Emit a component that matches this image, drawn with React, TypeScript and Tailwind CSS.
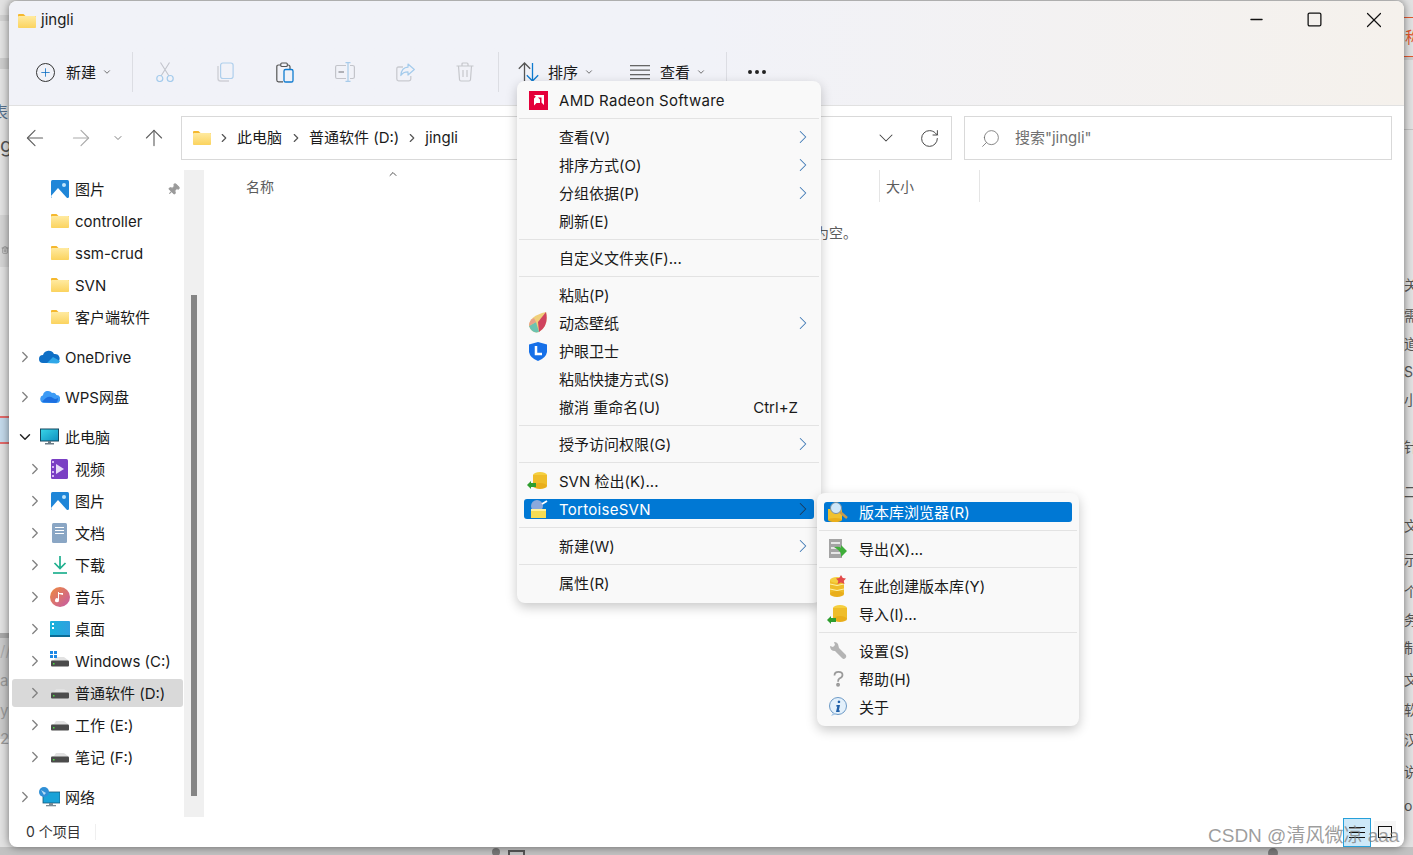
import React from "react";
import { ChevronDown, ChevronRight, ArrowLeft, ArrowRight, ArrowUp, RotateCw, Search, Plus, Pin, Minus, Square, X, Ellipsis, Trash2 } from "lucide-react";

const FONT = "font-['Inter','Noto_Sans_CJK_SC',sans-serif]";

const Folder = ({ s = 18 }: { s?: number }) => (
  <svg width={s} height={s * 0.78} viewBox="0 0 18 14">
    <path d="M0 1.200C0 .5.5 0 1.200 0h4.300l2 2H18v2H0z" fill="#f5b82e" />
    <rect y="2" width="18" height="12" rx="1" fill="url(#fg)" />
    <defs>
      <linearGradient id="fg" x1="0" y1="0" x2="0" y2="1">
        <stop offset="0" stopColor="#ffeaa0" />
        <stop offset="1" stopColor="#fbd35e" />
      </linearGradient>
    </defs>
  </svg>
);

const Drive = ({ win }: { win?: boolean }) => (
  <svg width="20" height="20" viewBox="0 0 20 20">
    <path d="M4 9 L6 6 H14 L18 9 V10 H1z" fill="#e2e2e2" />
    <rect x="1" y="9.500" width="18" height="6" rx="1" fill="#4b4b4b" />
    <rect x="3" y="12" width="1.500" height="1.500" fill="#4ade40" />
    {win && (
      <g fill="#1e88e5">
        <rect x="0" y="0" width="3" height="3" />
        <rect x="4" y="0" width="3" height="3" />
        <rect x="0" y="4" width="3" height="3" />
        <rect x="4" y="4" width="3" height="3" />
      </g>
    )}
  </svg>
);

const Pic = () => (
  <svg width="18" height="18" viewBox="0 0 18 18">
    <rect width="18" height="18" rx="1.500" fill="#1f86d8" />
    <circle cx="13" cy="5" r="2" fill="#bfe4fb" />
    <path d="M0 16 L7 8 L16 18 H1z" fill="#fff" />
  </svg>
);

const icons: Record<string, React.ReactNode> = {
  folder: <Folder />,
  pic: <Pic />,
  onedrive: (
    <svg width="21" height="14" viewBox="0 0 21 14">
      <path d="M4 13a4 4 0 0 1 0-8 6 6 0 0 1 11-1 4.500 4.500 0 0 1 2 9z" fill="#0f6fc6" />
      <path d="M8 13 L14 7 L21 11 Q20 14 17 13.500z" fill="#2fa7e8" />
    </svg>
  ),
  wps: (
    <svg width="20" height="14" viewBox="0 0 20 14">
      <path d="M4 13a4 4 0 0 1-1-7.800A5 5 0 0 1 12 3a4 4 0 0 1 4.500 2A4 4 0 0 1 16 13z" fill="#3d9bf5" />
      <path d="M2 12 Q8 4 13 8 Q15 10 18 8 Q18 13 15 13z" fill="#1c6fe0" />
    </svg>
  ),
  pc: (
    <svg width="19" height="18" viewBox="0 0 19 18">
      <rect x="0.500" y="1" width="18" height="12" fill="url(#pcg)" stroke="#16475f" />
      <rect x="8" y="13" width="3" height="2" fill="#6b7b85" />
      <rect x="5" y="15" width="9" height="1.500" fill="#6b7b85" />
      <defs>
        <linearGradient id="pcg" x1="0" y1="0" x2="1" y2="1">
          <stop offset="0" stopColor="#39d6e8" />
          <stop offset="1" stopColor="#0e8fc0" />
        </linearGradient>
      </defs>
    </svg>
  ),
  video: (
    <svg width="17" height="20" viewBox="0 0 17 20">
      <rect width="17" height="20" rx="1.500" fill="#7a3fc4" />
      <path d="M5 5 L13 10 L5 15z" fill="#e8dcfa" />
      <g fill="#d7b8f5">
        <rect x="1" y="2" width="2" height="2" />
        <rect x="1" y="7" width="2" height="2" />
        <rect x="1" y="12" width="2" height="2" />
        <rect x="1" y="16" width="2" height="2" />
      </g>
    </svg>
  ),
  doc: (
    <svg width="15" height="20" viewBox="0 0 15 20">
      <rect width="15" height="20" rx="1.500" fill="#8aa6c4" />
      <g fill="#fff">
        <rect x="3" y="4" width="9" height="1" />
        <rect x="3" y="7" width="9" height="1" />
        <rect x="3" y="10" width="9" height="1" />
      </g>
    </svg>
  ),
  down: (
    <svg width="16" height="20" viewBox="0 0 16 20" fill="none" stroke="#1fb08f" strokeWidth="1.700">
      <path d="M8 1 V13 M2.500 8 L8 13.500 L13.500 8" />
      <path d="M1 18 H15" />
    </svg>
  ),
  music: (
    <svg width="20" height="20" viewBox="0 0 20 20">
      <circle cx="10" cy="10" r="10" fill="url(#mg)" />
      <path d="M9 5 L9 13 A2 2 0 1 1 8 11.500 V5 Z M8 5 L13 6 V8 L9 7z" fill="#fff" />
      <defs>
        <linearGradient id="mg" x1="0" y1="0" x2="1" y2="1">
          <stop offset="0" stopColor="#ef8a3c" />
          <stop offset="1" stopColor="#c45aa8" />
        </linearGradient>
      </defs>
    </svg>
  ),
  desktop: (
    <svg width="20" height="16" viewBox="0 0 20 16">
      <rect width="20" height="16" rx="1" fill="url(#dg)" />
      <rect x="2" y="2" width="2" height="2" fill="#fff" />
      <rect x="2" y="6" width="2" height="2" fill="#fff" />
      <rect y="14" width="20" height="2" fill="#0a6c96" />
      <defs>
        <linearGradient id="dg" x1="0" y1="0" x2="1" y2="0">
          <stop offset="0" stopColor="#19b3da" />
          <stop offset="1" stopColor="#2fa0e0" />
        </linearGradient>
      </defs>
    </svg>
  ),
  drive: <Drive />,
  win: <Drive win />,
  net: (
    <svg width="21" height="20" viewBox="0 0 21 20">
      <rect x="4" y="5" width="17" height="11" fill="#19a2d8" stroke="#14597a" strokeWidth=".8" />
      <rect x="10" y="16" width="4" height="2" fill="#7a8a94" />
      <rect x="7" y="18" width="10" height="1.300" fill="#7a8a94" />
      <circle cx="5" cy="5" r="5" fill="#2f8fd6" />
      <path d="M2 3 L7 6 L5 8z" fill="#b9dcf5" />
    </svg>
  ),
};

type Nav = { icon: string; label: string; indent: number; arrow?: "r" | "d"; gap?: boolean; sel?: boolean; pin?: boolean };

const nav: Nav[] = [
  { icon: "pic", label: "图片", indent: 1, pin: true },
  { icon: "folder", label: "controller", indent: 1 },
  { icon: "folder", label: "ssm-crud", indent: 1 },
  { icon: "folder", label: "SVN", indent: 1 },
  { icon: "folder", label: "客户端软件", indent: 1 },
  { icon: "onedrive", label: "OneDrive", indent: 0, arrow: "r", gap: true },
  { icon: "wps", label: "WPS网盘", indent: 0, arrow: "r", gap: true },
  { icon: "pc", label: "此电脑", indent: 0, arrow: "d", gap: true },
  { icon: "video", label: "视频", indent: 1, arrow: "r" },
  { icon: "pic", label: "图片", indent: 1, arrow: "r" },
  { icon: "doc", label: "文档", indent: 1, arrow: "r" },
  { icon: "down", label: "下载", indent: 1, arrow: "r" },
  { icon: "music", label: "音乐", indent: 1, arrow: "r" },
  { icon: "desktop", label: "桌面", indent: 1, arrow: "r" },
  { icon: "win", label: "Windows (C:)", indent: 1, arrow: "r" },
  { icon: "drive", label: "普通软件 (D:)", indent: 1, arrow: "r", sel: true },
  { icon: "drive", label: "工作 (E:)", indent: 1, arrow: "r" },
  { icon: "drive", label: "笔记 (F:)", indent: 1, arrow: "r" },
  { icon: "net", label: "网络", indent: 0, arrow: "r", gap: true },
];

const NavRow = ({ n }: { n: Nav }) => (
  <div className={`relative flex h-[28px] items-center rounded-[3px] shrink-0 ml-[3px] mr-[1px] ${n.sel ? "bg-[#d9d9d9]" : ""} ${n.gap ? "mt-[12px]" : "mt-[4px]"}`}>
    <div className={`flex justify-center items-center shrink-0 mr-[2px] ${n.indent ? "w-[36px] pl-[10px]" : "w-[26px]"}`}>
      {n.arrow === "r" && <ChevronRight size={18} strokeWidth={1.7} className="text-[#808080]" />}
      {n.arrow === "d" && <ChevronDown size={18} strokeWidth={1.9} className="text-[#222]" />}
    </div>
    <div className="w-[25px] flex items-center justify-center shrink-0 -ml-[3px] mr-[3px]">{icons[n.icon]}</div>
    <span className="text-[15px] text-[#1a1a1a] whitespace-nowrap pt-[2px]">{n.label}</span>
    {n.pin && <Pin size={13} className="absolute right-[3px] text-[#9a9a9a] fill-[#9a9a9a] rotate-45" />}
  </div>
);

const Tool = ({ children, className = "" }: { children: React.ReactNode; className?: string }) => (
  <div className={`flex items-center justify-center ${className}`}>{children}</div>
);

const CutIcon = () => (
  <svg width="18" height="20" viewBox="0 0 18 20" fill="none">
    <path d="M5 14 L13.500 .5 M13 14 L4.500 .5" stroke="#c2c4cc" strokeWidth="1.100" />
    <circle cx="3.800" cy="16.500" r="3" stroke="#a4cbec" strokeWidth="1.200" />
    <circle cx="14.200" cy="16.500" r="3" stroke="#a4cbec" strokeWidth="1.200" />
  </svg>
);
const CopyIcon = () => (
  <svg width="17" height="20" viewBox="0 0 17 20" fill="none">
    <path d="M1 4 V16.500 Q1 19 3.500 19 H12" stroke="#cfd0d6" strokeWidth="1.400" />
    <rect x="3.600" y="1" width="12.500" height="15.500" rx="2.200" stroke="#afcfec" strokeWidth="1.200" />
  </svg>
);
const PasteIcon = () => (
  <svg width="18" height="21" viewBox="0 0 18 21" fill="none">
    <path d="M5 3 H2.500 Q.8 3 .8 4.800 V18 Q.8 19.800 2.500 19.800 H7 M11 3 H12 Q14 3 14 5 V7" stroke="#555" strokeWidth="1.200" />
    <rect x="4.800" y="1" width="6.500" height="3.500" rx="1" stroke="#555" strokeWidth="1.100" />
    <rect x="8" y="7.500" width="9" height="12.500" rx="1.600" stroke="#0f7bd0" strokeWidth="1.300" />
  </svg>
);
const RenameIcon = () => (
  <svg width="20" height="20" viewBox="0 0 20 20" fill="none" stroke="#c3c4ca" strokeWidth="1.200">
    <path d="M11 3.500 H2 Q.6 3.500 .6 5 V15 Q.6 16.500 2 16.500 H11 M15 3.500 H17.500 Q19.400 3.500 19.400 5 V15 Q19.400 16.500 17.500 16.500 H15" />
    <path d="M13 .6 V19.400 M10.500 .6 H15.500 M10.500 19.400 H15.500" stroke="#a8cbea" />
    <path d="M3.500 10 H9" stroke="#9a9ba2" strokeWidth="1.500" />
  </svg>
);
const ShareIcon = () => (
  <svg width="19" height="19" viewBox="0 0 19 19" fill="none">
    <path d="M7 4 H2.500 Q.8 4 .8 5.800 V16 Q.8 17.800 2.500 17.800 H13 Q14.800 17.800 14.800 16 V13" stroke="#c9cad0" strokeWidth="1.300" />
    <path d="M12 1 L18.300 6.500 L12 12 V8.800 Q7 8.800 4.800 12.500 Q5.500 4.500 12 4.200z" stroke="#a4cbec" strokeWidth="1.200" strokeLinejoin="round" />
  </svg>
);
const BinIcon = () => (
  <svg width="18" height="20" viewBox="0 0 18 20" fill="none" stroke="#c6c7cc" strokeWidth="1.200">
    <path d="M.5 4 H17.500 M6 4 V2 Q6 1 7 1 H11 Q12 1 12 2 V4" />
    <path d="M2.500 4 L3.500 17.500 Q3.600 19 5 19 H13 Q14.400 19 14.500 17.500 L15.500 4" />
    <path d="M7 8 V15 M11 8 V15" />
  </svg>
);
const SortIcon = () => (
  <svg width="21" height="20" viewBox="0 0 21 20" fill="none" strokeWidth="1.300">
    <path d="M6.500 19 V1 M.8 6.700 L6.500 1 L12.200 6.700" stroke="#555" />
    <path d="M14.500 1 V19 M8.800 13.300 L14.500 19 L20.200 13.300" stroke="#0f7bd0" />
  </svg>
);
const ViewIcon = () => (
  <svg width="20" height="16" viewBox="0 0 20 16" fill="#666">
    <rect y="1" width="20" height="1.300" />
    <rect y="5.500" width="20" height="1.300" />
    <rect y="10" width="20" height="1.300" />
    <rect y="14" width="20" height="1.300" />
  </svg>
);

type MI = { t: string; ic?: React.ReactNode; arrow?: boolean; sep?: boolean; hot?: boolean; sc?: string; wide?: boolean };

const withArrow = (c: string) => (
  <svg width="22" height="20" viewBox="0 0 22 20">
    <ellipse cx="13" cy="4" rx="7" ry="3" fill="#f5cf3f" />
    <rect x="6" y="4" width="14" height="11" fill="#efbd2a" />
    <ellipse cx="13" cy="15" rx="7" ry="3" fill="#e9ae1b" />
    <path d={c} fill="#2f9e2f" />
  </svg>
);

const amd = (
  <svg width="19" height="19" viewBox="0 0 19 19">
    <rect width="19" height="19" fill="#e4003a" />
    <path d="M5 4 H15 V14 L12.500 11.500 V6.500 H7.500z M5 7.500 L7.500 5 V5 L11 8.500 V12 H7.500 L5 14.500z" fill="#fff" />
  </svg>
);

const leaf = (
  <svg width="20" height="22" viewBox="0 0 20 22">
    <path d="M1 14 Q1 4 18 0 Q21 14 11 20 Q4 22 1 14z" fill="#f0cf7a" />
    <path d="M18 0 Q21 14 11 20 L10 10z" fill="#d0435f" />
    <path d="M1 14 Q4 22 11 20 L8 10z" fill="#6cc2b0" />
    <path d="M1 14 Q1 8 6 6 L8 10z" fill="#e9a08a" />
  </svg>
);

const shield = (
  <svg width="18" height="19" viewBox="0 0 18 19">
    <path d="M9 0 L18 2.500 V10 Q17 16 9 19 Q1 16 0 10 V2.500z" fill="#1670e8" />
    <path d="M7 4 V12 H13" stroke="#fff" strokeWidth="2.500" fill="none" />
  </svg>
);

const tortoise = (
  <svg width="20" height="18" viewBox="0 0 20 18">
    <circle cx="9" cy="6" r="6" fill="#8aa9dc" />
    <path d="M14 4 L19 1" stroke="#fff" strokeWidth="2" />
    <rect x="3" y="9" width="15" height="9" fill="#f4dc55" />
    <rect x="3" y="9" width="15" height="2" fill="#fff2a0" />
  </svg>
);

const repoBrowser = (
  <svg width="22" height="20" viewBox="0 0 22 20">
    <rect x="1" y="7" width="14" height="11" fill="#f0c12f" />
    <ellipse cx="8" cy="18" rx="7" ry="2" fill="#e9ae1b" />
    <circle cx="9" cy="6" r="5.500" fill="#cfe6f8" stroke="#7a8f9f" />
    <path d="M13 10 L20 16" stroke="#c79a4c" strokeWidth="2.500" />
  </svg>
);

const exportIc = (
  <svg width="20" height="20" viewBox="0 0 20 20">
    <rect x="1" y="0" width="13" height="19" fill="#a4a4a4" />
    <g fill="#e6e6e6">
      <rect x="3" y="3" width="9" height="2" />
      <rect x="3" y="8" width="9" height="2" />
      <rect x="3" y="13" width="9" height="2" />
    </g>
    <path d="M6 8 Q12 7 13 9 V6 L19 12 L13 18 V14 Q11 11 6 8z" fill="#3fae3a" />
  </svg>
);

const starStack = (
  <svg width="20" height="22" viewBox="0 0 20 22">
    <rect x="2" y="5" width="14" height="14" fill="#efbd2a" />
    <ellipse cx="9" cy="5" rx="7" ry="3" fill="#f5cf3f" />
    <ellipse cx="9" cy="19" rx="7" ry="3" fill="#e9ae1b" />
    <path d="M2 9 Q9 12 16 9 M2 14 Q9 17 16 14" stroke="#fff2a8" fill="none" />
    <path d="M13 0 L14.800 3 L18 3.500 L15.700 6 L16.500 9 L13 7.500 L9.500 9 L10.300 6 L8 3.500 L11.200 3z" fill="#e24a4a" />
  </svg>
);

const wrench = (
  <svg width="18" height="18" viewBox="0 0 18 18">
    <path d="M1 4 L4 5 L6 3 L5 0 Q9 0 9.500 4 L10 6 L17 13 Q18 15 16 16.500 Q14.500 17.500 13 16 L6 9 Q1 9 1 4z" fill="#b4b4b4" />
  </svg>
);

const help = (
  <svg width="11" height="16" viewBox="0 0 12 18" fill="none" stroke="#9a9a9a" strokeWidth="2">
    <path d="M1.500 5 Q1.500 1 6 1 Q10.500 1 10.500 4.500 Q10.500 7 7 8.500 Q5.500 9.500 5.500 12" />
    <circle cx="5.500" cy="15.500" r="1.200" />
  </svg>
);

const info = (
  <svg width="20" height="20" viewBox="0 0 20 20">
    <circle cx="10" cy="9" r="8.500" fill="#e3f0fb" stroke="#6d9ac6" />
    <path d="M5 16 L3 19 L9 17z" fill="#a9c8e6" />
    <path d="M11 3.500 a1.300 1.300 0 1 1 -.1 0z M8.500 8 H12 L10.800 13.500 H12 L11.500 15 H8 L9.300 9.500 H8.200z" fill="#1f5fa8" />
  </svg>
);

const main: MI[] = [
  { t: "AMD Radeon Software", ic: amd, sep: true, wide: true },
  { t: "查看(V)", arrow: true },
  { t: "排序方式(O)", arrow: true },
  { t: "分组依据(P)", arrow: true },
  { t: "刷新(E)", sep: true },
  { t: "自定义文件夹(F)...", sep: true },
  { t: "粘贴(P)" },
  { t: "动态壁纸", ic: leaf, arrow: true },
  { t: "护眼卫士", ic: shield },
  { t: "粘贴快捷方式(S)" },
  { t: "撤消 重命名(U)", sc: "Ctrl+Z", sep: true },
  { t: "授予访问权限(G)", arrow: true, sep: true },
  { t: "SVN 检出(K)...", ic: withArrow("M0 14 L4 10 V12 H9 V16 H4 V18z") },
  { t: "TortoiseSVN", ic: tortoise, arrow: true, hot: true, sep: true, wide: true },
  { t: "新建(W)", arrow: true, sep: true },
  { t: "属性(R)" },
];

const sub: MI[] = [
  { t: "版本库浏览器(R)", ic: repoBrowser, hot: true, sep: true },
  { t: "导出(X)...", ic: exportIc, sep: true },
  { t: "在此创建版本库(Y)", ic: starStack },
  { t: "导入(I)...", ic: withArrow("M0 16 L4 12 V14 H9 V18 H4 V20z"), sep: true },
  { t: "设置(S)", ic: wrench },
  { t: "帮助(H)", ic: help },
  { t: "关于", ic: info },
];

const MenuRows = ({ items }: { items: MI[] }) => (
  <>
    {items.map((m) => (
      <React.Fragment key={m.t}>
        <div className={`flex h-[20px] my-[4px] mx-[7px] items-center rounded-[3px] ${m.hot ? "bg-[#0078d4] text-white" : "text-[#1a1a1a]"}`}>
          <div className="w-[28px] flex items-center justify-center shrink-0">{m.ic}</div>
          <span className={`ml-[7px] text-[15px] flex-1 whitespace-nowrap pt-[2px] ${m.wide ? "tracking-[0.28px]" : ""}`}>{m.t}</span>
          {m.sc && <span className="text-[15px] mr-[16px] pt-[2px]">{m.sc}</span>}
          {m.arrow && <ChevronRight size={22} strokeWidth={1.1} className={m.hot ? "text-[#1a3a5a]" : "text-[#3f78b5]"} />}
        </div>
        {m.sep && <div className="h-px bg-[#e3e3e3] mx-[2px] my-[4px]" />}
      </React.Fragment>
    ))}
  </>
);

const sideL: [number, string, string][] = [
  [112, "表", "-left-[8px] text-[#56708c] text-[16px]"],
  [145, "g", "left-0 text-[#555] text-[20px]"],
  [651, "//", "left-0 text-[#aaa] text-[15px]"],
  [681, "a", "left-0 text-[#999] text-[15px]"],
  [711, "yp", "left-0 text-[#999] text-[15px]"],
  [739, "2", "left-0 text-[#999] text-[15px]"],
];

const sideR: [number, string][] = [
  [285, "关"], [316, "需"], [344, "道"], [372, "S"], [400, "小"], [447, "针"], [492, "二"], [526, "文"], [560, "示"], [592, "个"], [620, "务"], [648, "制"], [680, "文"], [710, "软"], [740, "汉"], [772, "说"], [806, "ou"],
];

export default function App() {
  return (
    <div className={`relative w-[1413px] h-[855px] overflow-hidden bg-[#e2e2e2] ${FONT}`}>
      {/* page showing behind the window */}
      <div className="absolute left-0 top-[15px] w-[9px] h-[6px] bg-[#d2d2d2]" />
      <div className="absolute left-0 top-[58px] w-[9px] h-[11px] bg-[#cdcdcd]" />
      <div className="absolute left-0 top-[215px] w-[9px] h-[52px] bg-[#d4d4d4]" />
      <div className="absolute left-0 top-[416px] w-[9px] h-[28px] bg-[#c3d9ea] border-y-2 border-[#e26a6a]" />
      <div className="absolute left-0 top-[633px] w-[9px] h-[106px] bg-[#c9c9c9] border-t-[5px] border-[#a8a8a8]" />
      <Trash2 size={8} className="absolute left-[1px] top-[246px] text-[#888]" />
      {sideL.map(([y, t, c]) => (
        <span key={y} style={{ top: y - 12 }} className={`absolute leading-[24px] ${c}`}>{t}</span>
      ))}
      <div className="absolute left-[1404px] top-[17px] w-[9px] h-[40px] border-y border-[#e4572e]" />
      <div className="absolute left-[1404px] top-[57px] w-[9px] h-[3px] bg-[#cfcfcf]" />
      <div className="absolute left-[1404px] top-[129px] w-[9px] h-px bg-[#c4c4c4]" />
      <span className="absolute left-[1405px] top-[26px] text-[16px] text-[#e4572e] leading-[22px]">称</span>
      {sideR.map(([y, t]) => (
        <span key={y} style={{ top: y - 10 }} className="absolute left-[1404px] leading-[20px] text-[14px] text-[#555] whitespace-nowrap">{t}</span>
      ))}
      <div className="absolute left-0 top-[847px] w-full h-[8px] bg-[#c2c2c2]" />
      <div className="absolute left-[492px] top-[848px] w-[8px] h-[8px] rounded-full bg-[#777]" />
      <div className="absolute left-[508px] top-[850px] w-[17px] h-[8px] border-2 border-[#555]" />
      <div className="absolute left-[1268px] top-[848px] w-[10px] h-[10px] rounded-full bg-[#777]" />

      {/* window */}
      <div className="absolute left-[9px] top-[1px] w-[1395px] h-[846px] bg-white rounded-[8px] overflow-hidden flex flex-col shadow-[0_0_8px_rgba(0,0,0,0.5)]">
        {/* title + toolbar */}
        <div className="h-[105px] shrink-0 flex flex-col border-b border-[#e1e1e1] bg-gradient-to-r from-[#f1f2f8] via-[#f1f2f8] to-[#f5f1ec]">
          <div className="h-[40px] flex items-center pl-[9px] shrink-0">
            <Folder s={18} />
            <span className="ml-[5px] text-[15px] text-[#1a1a1a] -mt-[1px]">jingli</span>
            <div className="ml-auto flex items-center -mt-[3px]">
              <div className="w-[59px] flex justify-center"><Minus size={19} strokeWidth={1.7} className="text-[#111]" /></div>
              <div className="w-[59px] flex justify-center -ml-[1px] mr-[1px]"><Square size={17} strokeWidth={1.8} className="text-[#111]" /></div>
              <div className="w-[59px] flex justify-center -ml-[1px] mr-[1px]"><X size={26} strokeWidth={1.1} className="text-[#111]" /></div>
            </div>
          </div>
          <div className="flex items-center h-[40px] mt-[11px] text-[15px] text-[#1a1a1a]">
            <div className="flex items-center w-[123px] pl-[27px]">
              <div className="w-[19px] h-[19px] rounded-full border border-[#333] flex items-center justify-center">
                <Plus size={13} strokeWidth={1.4} className="text-[#0067c0]" />
              </div>
              <span className="ml-[11px] pt-[2px]">新建</span>
              <ChevronDown size={10} className="ml-[6px] text-[#555]" />
            </div>
            <div className="w-px h-[40px] bg-[#dcdde3] mr-[2px]" />
            <Tool className="w-[60px]"><CutIcon /></Tool>
            <Tool className="w-[60px]"><CopyIcon /></Tool>
            <Tool className="w-[60px]"><PasteIcon /></Tool>
            <Tool className="w-[60px]"><RenameIcon /></Tool>
            <Tool className="w-[60px]"><ShareIcon /></Tool>
            <Tool className="w-[60px]"><BinIcon /></Tool>
            <div className="w-px h-[40px] bg-[#dcdde3] ml-[3px]" />
            <div className="flex items-center w-[114px] pl-[19px]">
              <SortIcon />
              <span className="ml-[9px] pt-[2px]">排序</span>
              <ChevronDown size={10} className="ml-[6px] text-[#555]" />
            </div>
            <div className="flex items-center w-[114px] pl-[17px]">
              <ViewIcon />
              <span className="ml-[10px] pt-[2px]">查看</span>
              <ChevronDown size={10} className="ml-[6px] text-[#555]" />
            </div>
            <div className="w-px h-[40px] bg-[#dcdde3] -ml-[1px]" />
            <Ellipsis size={24} className="ml-[18px] text-[#222]" />
          </div>
        </div>
        {/* address row */}
        <div className="h-[64px] shrink-0 flex items-center">
          <div className="w-[172px] flex items-center shrink-0 text-[#606060]">
            <ArrowLeft size={26} strokeWidth={1.05} className="ml-[13px]" />
            <ArrowRight size={26} strokeWidth={1.05} className="ml-[20px] text-[#aaa]" />
            <ChevronDown size={12} strokeWidth={1.6} className="ml-[18px]" />
            <ArrowUp size={26} strokeWidth={1.05} className="ml-[17px]" />
          </div>
          <div className="w-[771px] h-[44px] border border-[#d9d9d9] flex items-center pl-[11px] text-[15px] text-[#1a1a1a] shrink-0">
            <Folder s={18} />
            <ChevronRight size={14} strokeWidth={2} className="ml-[6px] text-[#555]" />
            <span className="ml-[6px]">此电脑</span>
            <ChevronRight size={14} strokeWidth={2} className="ml-[7px] text-[#555]" />
            <span className="ml-[6px]">普通软件 (D:)</span>
            <ChevronRight size={14} strokeWidth={2} className="ml-[6px] text-[#555]" />
            <span className="ml-[6px]">jingli</span>
            <ChevronDown size={24} strokeWidth={1.05} className="ml-auto mr-[21px] text-[#444]" />
            <RotateCw size={21} strokeWidth={1.1} className="mr-[11px] text-[#444]" />
          </div>
          <div className="w-[428px] h-[44px] ml-[12px] border border-[#d9d9d9] flex items-center pl-[15px] text-[15px] text-[#707070] shrink-0">
            <Search size={21} strokeWidth={0.95} className="-scale-x-100" />
            <span className="ml-[14px]">搜索"jingli"</span>
          </div>
        </div>
        {/* body */}
        <div className="flex-1 flex min-h-0">
          <div className="w-[175px] shrink-0 flex flex-col pt-[1px] overflow-hidden">
            {nav.map((n, i) => <NavRow key={i} n={n} />)}
          </div>
          <div className="w-[20px] shrink-0 bg-[#f0f0f0] pl-[7px] pt-[125px] pb-[21px]">
            <div className="w-[6px] h-full bg-[#858585]" />
          </div>
          <div className="flex-1 relative">
            <div className="flex h-[32px] text-[14px] text-[#5c5c5c] items-center">
              <span className="ml-[42px] w-[633px]">名称</span>
              <div className="w-px h-[32px] bg-[#e5e5e5]" />
              <span className="ml-[6px] w-[93px]">大小</span>
              <div className="w-px h-[32px] bg-[#e5e5e5]" />
            </div>
            <ChevronDown size={12} className="absolute left-[183px] top-[-2px] rotate-180 text-[#555]" />
            <div className="absolute left-[555px] top-[52px] text-[14px] text-[#5c5c5c] whitespace-nowrap">此文件夹为空。</div>
          </div>
        </div>
        {/* status */}
        <div className="h-[30px] shrink-0 flex items-center pl-[17px] text-[14px] text-[#333]">
          <span className="-mt-[2px]">0 个项目</span>
          <div className="w-px h-[16px] bg-[#efefef] ml-[14px]" />
          <div className="ml-auto flex items-center mr-[8px]">
            <div className="w-[28px] h-[29px] bg-[#cde8f8] border border-[#26a0da] flex flex-col gap-[4px] items-center justify-center">
              <div className="w-[16px] h-px bg-[#111]" />
              <div className="w-[16px] h-px bg-[#111]" />
              <div className="w-[16px] h-px bg-[#111]" />
            </div>
            <div className="w-[22px] h-[22px] ml-[3px] flex items-center justify-center bg-[#f6f6f6]">
              <div className="w-[14px] h-[12px] border border-[#111]" />
            </div>
          </div>
        </div>
      </div>

      {/* context menus */}
      <div className="absolute left-[517px] top-[81px] w-[304px] h-[522px] bg-[#f9f9f9] rounded-[8px] shadow-[0_4px_12px_rgba(0,0,0,0.22)] pt-[5px] flex flex-col">
        <MenuRows items={main} />
      </div>
      <div className="absolute left-[817px] top-[493px] w-[262px] h-[233px] bg-[#f9f9f9] rounded-[8px] shadow-[0_4px_12px_rgba(0,0,0,0.22)] pt-[5px] flex flex-col">
        <MenuRows items={sub} />
      </div>

      {/* site watermark */}
      <div className="absolute left-[1208px] top-[823px] text-[19px] leading-[26px] text-[rgba(125,125,125,0.75)] whitespace-nowrap font-['Liberation_Sans','Noto_Sans_CJK_SC',sans-serif]">CSDN @清风微凉 aaa</div>
    </div>
  );
}
